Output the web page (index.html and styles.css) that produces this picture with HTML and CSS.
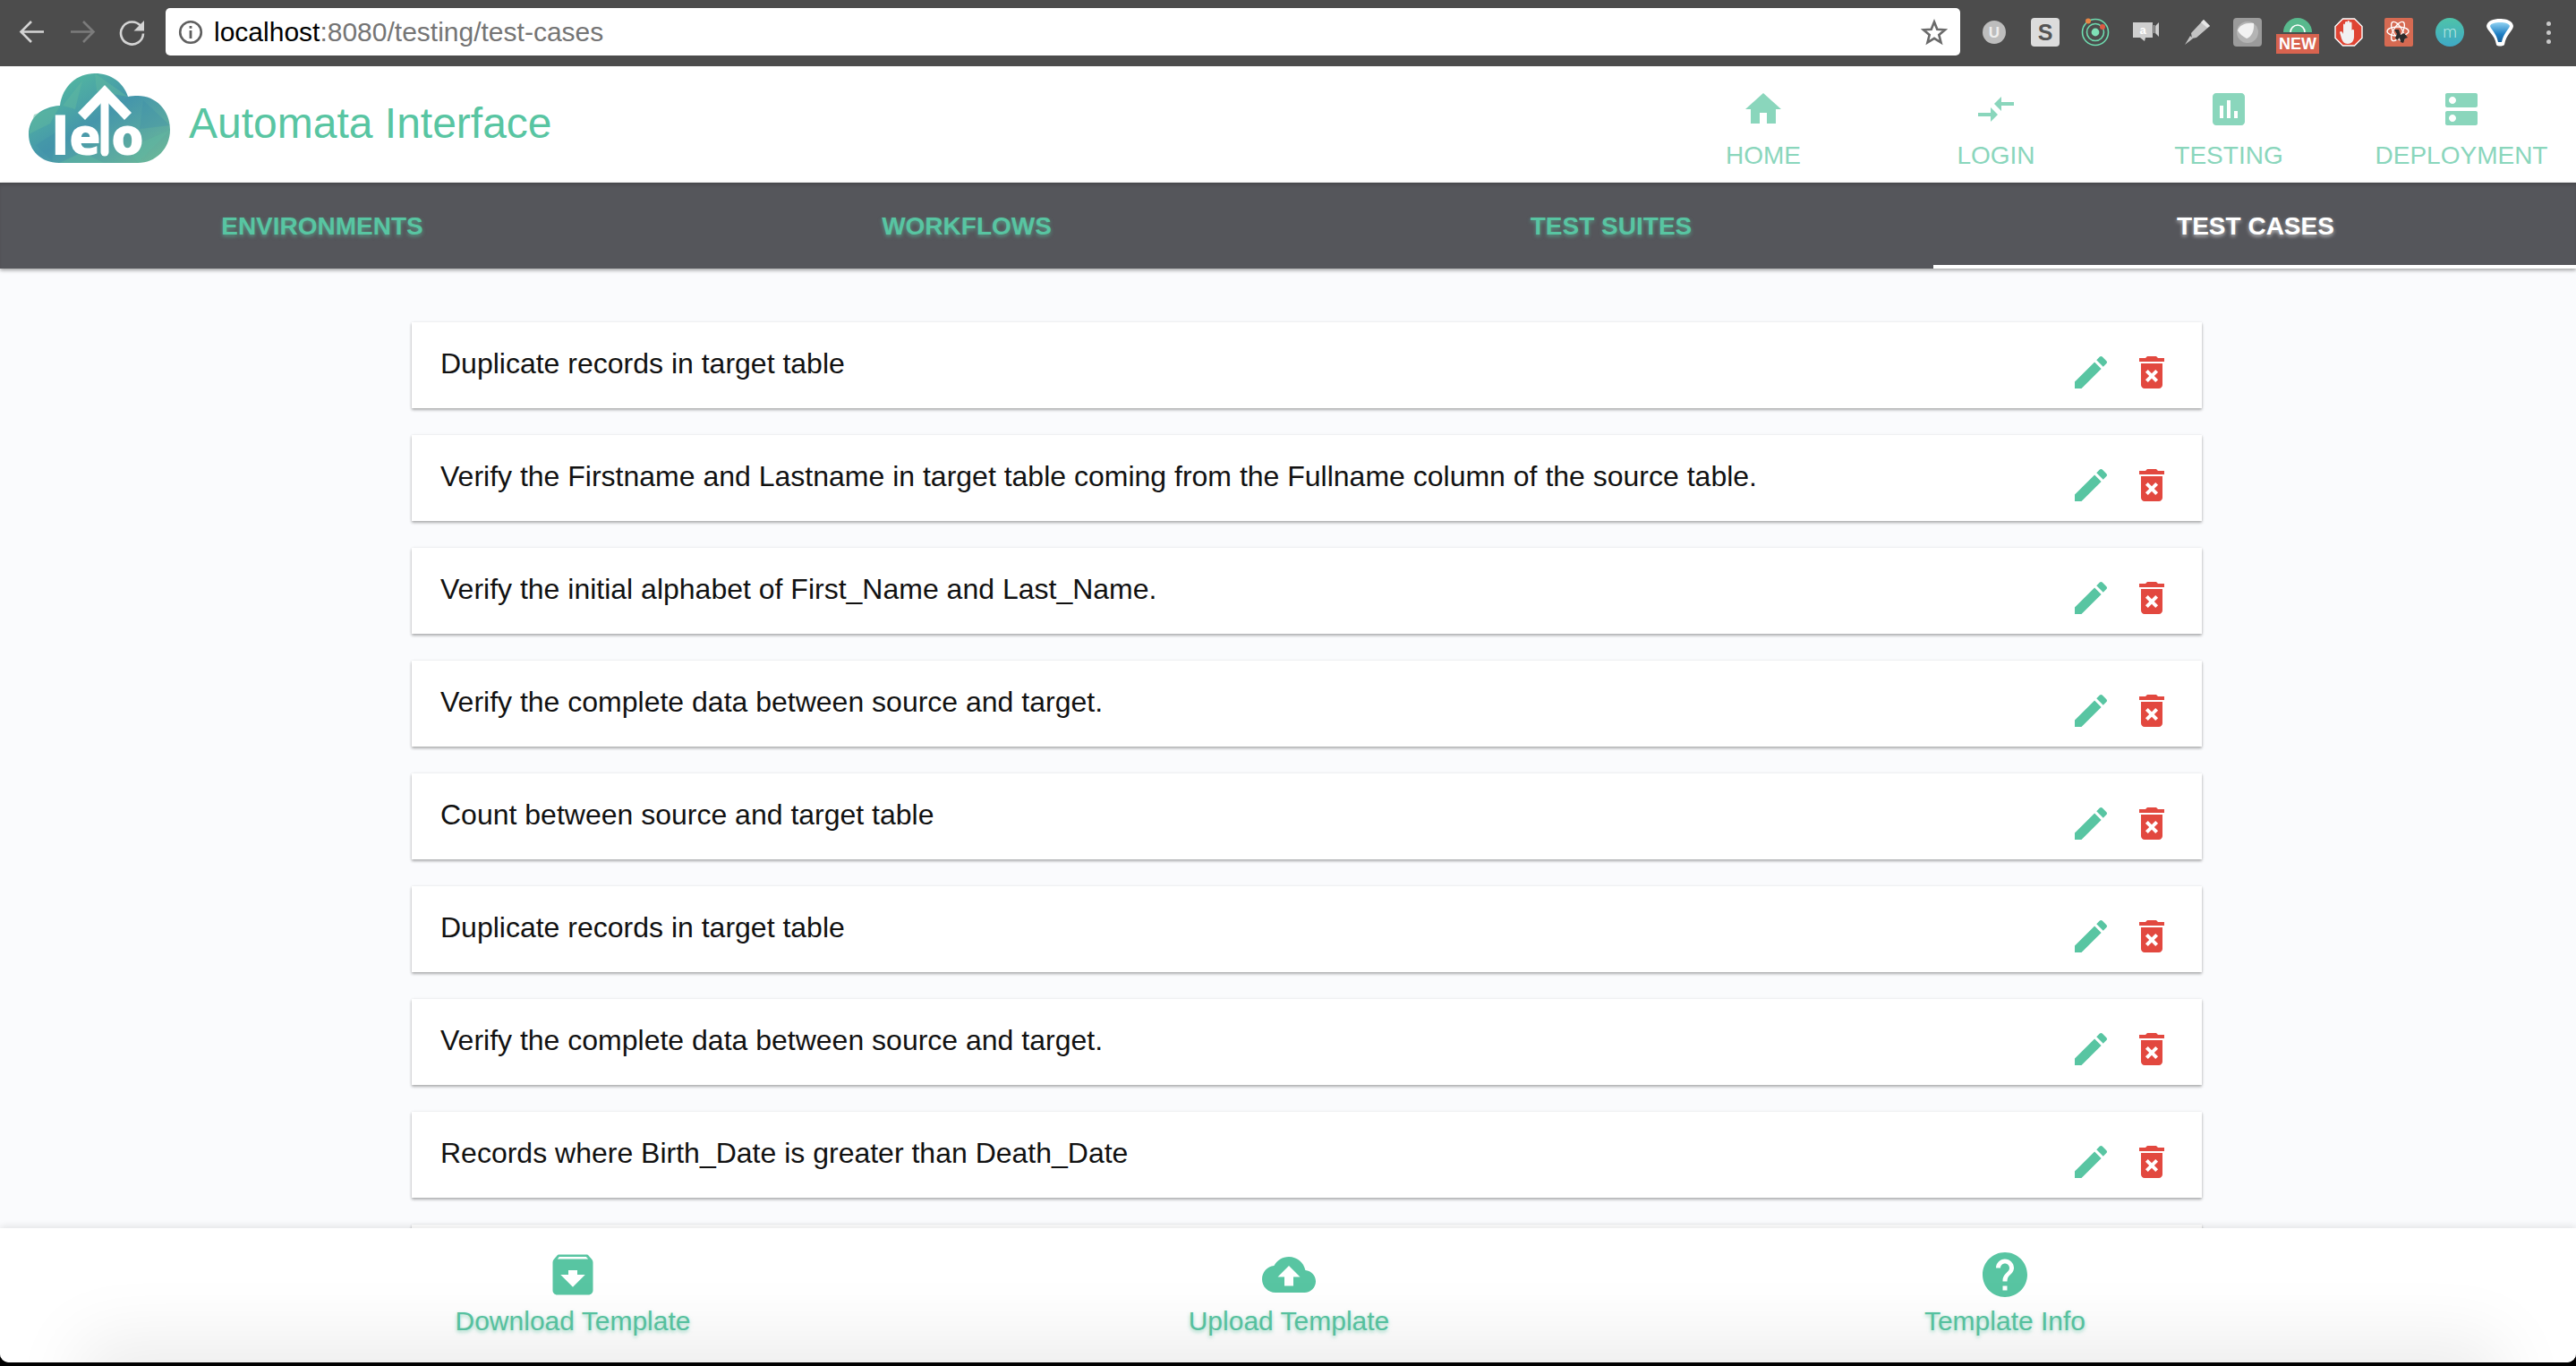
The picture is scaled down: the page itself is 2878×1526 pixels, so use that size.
FILE: index.html
```html
<!DOCTYPE html>
<html lang="en">
<head>
    <meta charset="UTF-8">
    <title>Automata Interface</title>
    <link rel="stylesheet" href="styles.css">
</head>
<body>
<div class="page">
    <div class="browser-bar">
        <div class="browser-nav">
            <svg class="bar-icon" viewBox="0 0 32 32"><path d="M29 15.500H5M15 4 3.500 15.500 15 27" fill="none" stroke="#d4d4d4" stroke-width="2.6"/></svg>
            <svg class="bar-icon" viewBox="0 0 32 32"><path d="M3 15.500h24M17 4l11.500 11.500L17 27" fill="none" stroke="#7b7b7b" stroke-width="2.6"/></svg>
            <svg class="bar-icon" viewBox="0 0 32 32"><path d="M25.500 9.500a12.500 12.500 0 1 0 2.500 8" fill="none" stroke="#d4d4d4" stroke-width="2.6"/><path d="M29 3v11.500H17.500z" fill="#d4d4d4"/></svg>
        </div>
        <div class="url-box">
            <svg class="info-icon" viewBox="0 0 28 28"><circle cx="14" cy="14" r="11.800" fill="none" stroke="#5f5f5f" stroke-width="2.6"/><path d="M12.600 12h2.800v9h-2.800zM12.600 7h2.800v2.800h-2.800z" fill="#5f5f5f"/></svg>
            <span class="url-text"><span class="url-host">localhost</span>:8080/testing/test-cases</span>
            <svg class="star-icon" viewBox="0 0 30 30"><path d="M15 3.500l3.300 8.200 8.800.6-6.800 5.600 2.200 8.600-7.500-4.700-7.500 4.700 2.200-8.600-6.800-5.600 8.800-.6z" fill="none" stroke="#6a6a6a" stroke-width="2.6"/></svg>
        </div>
        <div class="extensions">
            <svg class="ext" viewBox="0 0 32 32"><circle cx="16" cy="16" r="13" fill="#bdbdbd"/><text x="16" y="22" class="ext-label" font-size="17" fill="#eee">U</text></svg>
            <svg class="ext" viewBox="0 0 32 32"><rect width="32" height="32" rx="4" fill="#dcdcdc"/><text x="16" y="25" class="ext-label" font-size="25" fill="#555">S</text></svg>
            <svg class="ext" viewBox="0 0 32 32"><circle cx="16" cy="16" r="14.500" fill="none" stroke="#6fdcb0" stroke-width="1.6"/><circle cx="16" cy="16" r="9.500" fill="none" stroke="#6fdcb0" stroke-width="1.6"/><circle cx="16" cy="16" r="4.400" fill="#7fe0b6"/><circle cx="8" cy="3.600" r="3" fill="#e58545"/><circle cx="24" cy="10" r="3" fill="#de5a43"/></svg>
            <svg class="ext" viewBox="0 0 32 32"><path d="M1 5h22v17h-8l-1 4-5-4H1z" fill="#cfcfcf"/><path d="M24 8h1v9h-1zM26 9l4-4v16l-4-4z" fill="#cfcfcf"/><text x="12" y="18" class="ext-label" font-size="13" fill="#fff">a</text></svg>
            <svg class="ext" viewBox="0 0 32 32"><path d="M10 17 24 2l7 7-15 13-5 1zM9 20l3 3-9 7z" fill="#c4c4c4"/><path d="M24 2l7 7-3 2-7-6z" fill="#e6e6e6"/></svg>
            <svg class="ext" viewBox="0 0 32 32"><rect width="32" height="32" rx="4" fill="#9b9b9b"/><circle cx="16" cy="16" r="12" fill="#b4b4b4"/><path d="M5 14C7 8 14 5 23 6c1 8-3 16-8 17-4-2-8-5-10-9z" fill="#f2f2f2"/></svg>
            <div class="ext-new">
                <svg class="ext-arch" viewBox="0 0 32 16"><path d="M0 16a16 16 0 0 1 32 0z" fill="#58b98d"/><path d="M8 16a8 8 0 0 1 16 0" fill="none" stroke="#fff" stroke-width="1.6"/></svg>
                <span class="new-tag">NEW</span>
            </div>
            <svg class="ext" viewBox="0 0 32 32"><path d="M9.500 1h13L31 9.500v13L22.500 31h-13L1 22.500v-13z" fill="#df4433" stroke="#fff" stroke-width="1.4"/><path d="M10 15V8c0-2 2-2 2 0V5.500c0-2 2.500-2 2.500 0V4.500c0-2 2.500-2 2.500 0V6c0-2 2.500-2 2.500 0v8c0-1.500 2.500-1.500 2.500 0v7c0 5-3 8-7 8s-6-3-7-6l-2-7c1-2 3-1 4 2z" fill="#f1f1f1"/></svg>
            <svg class="ext" viewBox="0 0 32 32"><rect width="32" height="32" rx="2" fill="#d66a52"/><g fill="none" stroke="#fff" stroke-width="1.3"><ellipse cx="15" cy="15" rx="12" ry="5"/><ellipse cx="15" cy="15" rx="12" ry="5" transform="rotate(60 15 15)"/><ellipse cx="15" cy="15" rx="12" ry="5" transform="rotate(120 15 15)"/></g><path d="M11 13h5l2 6 4-2 4 5-3 1-2 5-3-1-1-5-3 3-2-3 2-4z" fill="#2c2c2c"/></svg>
            <svg class="ext" viewBox="0 0 32 32"><defs><linearGradient id="extM" x1="0" y1="0" x2="0" y2="1"><stop offset="0" stop-color="#4fc3a9"/><stop offset="1" stop-color="#3fa9c6"/></linearGradient></defs><circle cx="16" cy="16" r="16" fill="url(#extM)"/><text x="16" y="22" class="ext-thin" font-size="20" fill="#bfe9e8">m</text></svg>
            <svg class="ext" viewBox="0 0 32 32"><defs><linearGradient id="extD" x1="0" y1="0" x2="0" y2="1"><stop offset="0" stop-color="#8fd2f2"/><stop offset="0.6" stop-color="#1f7fc4"/><stop offset="1" stop-color="#155f9a"/></linearGradient></defs><path d="M1 9c1-6 8-8 15-8s14 2 15 8c0 5-8 9-10 21-1 2-8 2-9 0C10 18 1 14 1 9z" fill="#fff"/><path d="M5 9c1-3 6-4 11-4s10 1 11 4c-1 4-7 8-9 18h-4C12 17 6 13 5 9z" fill="url(#extD)"/></svg>
            <div class="ext-dots"><i></i><i></i><i></i></div>
        </div>
    </div>

    <header class="topbar">
        <div class="brand">
            <svg class="logo" viewBox="0 0 158 112">
                <defs>
                    <linearGradient id="logoFill" x1="0" y1="0" x2="1" y2="1">
                        <stop offset="0" stop-color="#58c59b"/>
                        <stop offset="0.5" stop-color="#4596ab"/>
                        <stop offset="1" stop-color="#6fbb97"/>
                    </linearGradient>
                </defs>
                <path d="M34 100C14 100 0 86 0 68 0 50 14 37 35 36 38 14 54 0 74 0c18 0 32 10 37 26 3-1 7-1 11-1 20 0 36 16 36 38 0 21-16 37-36 37z" fill="url(#logoFill)"/>
                <path d="M0 68 24 56 35 36 6 46zM74 0 111 26 76 20zM158 63 122 100 110 84zM34 100 60 88 84 100zM38 36 60 8 52 40z" fill="#5fb8a0" opacity="0.5"/>
                <path d="M128 30 158 58 124 62zM8 80 30 66 26 98z" fill="#3f8fa8" opacity="0.35"/>
                <path d="M85 88V24" stroke="#fff" stroke-width="9" stroke-linecap="round"/>
                <path d="M55 44 85 13l30 31-8 8-22-23-22 23z" fill="#fff"/>
                <text x="26" y="91" class="logo-text">l</text>
                <text x="45" y="91" class="logo-text">e</text>
                <text x="92" y="91" class="logo-text">o</text>
            </svg>
            <span class="brand-name">Automata Interface</span>
        </div>
        <nav class="main-nav">
            <a class="nav-item">
                <svg class="nav-icon" viewBox="0 0 24 24"><path d="M10 20v-6h4v6h5v-8h3L12 3 2 12h3v8z"/></svg>
                <span>HOME</span>
            </a>
            <a class="nav-item">
                <svg class="nav-icon" viewBox="0 0 24 24"><path d="M9.010 14H2v2h7.010v3L13 15l-3.990-4v3zm5.980-1v-3H22V8h-7.010V5L11 9l3.990 4z"/></svg>
                <span>LOGIN</span>
            </a>
            <a class="nav-item">
                <svg class="nav-icon" viewBox="0 0 24 24"><path d="M19 3H5c-1.100 0-2 .9-2 2v14c0 1.100.9 2 2 2h14c1.100 0 2-.9 2-2V5c0-1.100-.9-2-2-2zM9 17H7v-7h2v7zm4 0h-2V7h2v10zm4 0h-2v-4h2v4z"/></svg>
                <span>TESTING</span>
            </a>
            <a class="nav-item">
                <svg class="nav-icon" viewBox="0 0 24 24"><path d="M20 13H4c-.55 0-1 .45-1 1v6c0 .55.45 1 1 1h16c.55 0 1-.45 1-1v-6c0-.55-.45-1-1-1zM7 19c-1.100 0-2-.9-2-2s.9-2 2-2 2 .9 2 2-.9 2-2 2zM20 3H4c-.55 0-1 .45-1 1v6c0 .55.45 1 1 1h16c.55 0 1-.45 1-1V4c0-.55-.45-1-1-1zM7 9c-1.100 0-2-.9-2-2s.9-2 2-2 2 .9 2 2-.9 2-2 2z"/></svg>
                <span>DEPLOYMENT</span>
            </a>
        </nav>
    </header>

    <div class="tabs">
        <a class="tab">ENVIRONMENTS</a>
        <a class="tab">WORKFLOWS</a>
        <a class="tab">TEST SUITES</a>
        <a class="tab tab-active">TEST CASES</a>
    </div>

    <main class="content">
        <div class="case-card"><span class="case-title">Duplicate records in target table</span><div class="case-actions"><svg class="act act-edit" viewBox="0 0 24 24"><path d="M3 17.250V21h3.750L17.810 9.940l-3.750-3.750L3 17.250zM20.710 7.040c.39-.39.39-1.020 0-1.410l-2.340-2.340c-.39-.39-1.020-.39-1.410 0l-1.830 1.830 3.750 3.750 1.830-1.830z"/></svg><svg class="act act-delete" viewBox="0 0 24 24"><path d="M6 19c0 1.100.9 2 2 2h8c1.100 0 2-.9 2-2V7H6v12zm2.460-7.120l1.410-1.410L12 12.590l2.120-2.120 1.410 1.410L13.410 14l2.120 2.120-1.410 1.410L12 15.410l-2.120 2.120-1.410-1.410L10.590 14l-2.130-2.120zM15.500 4l-1-1h-5l-1 1H5v2h14V4z"/></svg></div></div>
        <div class="case-card"><span class="case-title">Verify the Firstname and Lastname in target table coming from the Fullname column of the source table.</span><div class="case-actions"><svg class="act act-edit" viewBox="0 0 24 24"><path d="M3 17.250V21h3.750L17.810 9.940l-3.750-3.750L3 17.250zM20.710 7.040c.39-.39.39-1.020 0-1.410l-2.340-2.340c-.39-.39-1.020-.39-1.410 0l-1.830 1.830 3.750 3.750 1.830-1.830z"/></svg><svg class="act act-delete" viewBox="0 0 24 24"><path d="M6 19c0 1.100.9 2 2 2h8c1.100 0 2-.9 2-2V7H6v12zm2.460-7.120l1.410-1.410L12 12.590l2.120-2.120 1.410 1.410L13.410 14l2.120 2.120-1.410 1.410L12 15.410l-2.120 2.120-1.410-1.410L10.590 14l-2.130-2.120zM15.500 4l-1-1h-5l-1 1H5v2h14V4z"/></svg></div></div>
        <div class="case-card"><span class="case-title">Verify the initial alphabet of First_Name and Last_Name.</span><div class="case-actions"><svg class="act act-edit" viewBox="0 0 24 24"><path d="M3 17.250V21h3.750L17.810 9.940l-3.750-3.750L3 17.250zM20.710 7.040c.39-.39.39-1.020 0-1.410l-2.340-2.340c-.39-.39-1.020-.39-1.410 0l-1.830 1.830 3.750 3.750 1.830-1.830z"/></svg><svg class="act act-delete" viewBox="0 0 24 24"><path d="M6 19c0 1.100.9 2 2 2h8c1.100 0 2-.9 2-2V7H6v12zm2.460-7.120l1.410-1.410L12 12.590l2.120-2.120 1.410 1.410L13.410 14l2.120 2.120-1.410 1.410L12 15.410l-2.120 2.120-1.410-1.410L10.590 14l-2.130-2.120zM15.500 4l-1-1h-5l-1 1H5v2h14V4z"/></svg></div></div>
        <div class="case-card"><span class="case-title">Verify the complete data between source and target.</span><div class="case-actions"><svg class="act act-edit" viewBox="0 0 24 24"><path d="M3 17.250V21h3.750L17.810 9.940l-3.750-3.750L3 17.250zM20.710 7.040c.39-.39.39-1.020 0-1.410l-2.340-2.340c-.39-.39-1.020-.39-1.410 0l-1.830 1.830 3.750 3.750 1.830-1.830z"/></svg><svg class="act act-delete" viewBox="0 0 24 24"><path d="M6 19c0 1.100.9 2 2 2h8c1.100 0 2-.9 2-2V7H6v12zm2.460-7.120l1.410-1.410L12 12.590l2.120-2.120 1.410 1.410L13.410 14l2.120 2.120-1.410 1.410L12 15.410l-2.120 2.120-1.410-1.410L10.590 14l-2.130-2.120zM15.500 4l-1-1h-5l-1 1H5v2h14V4z"/></svg></div></div>
        <div class="case-card"><span class="case-title">Count between source and target table</span><div class="case-actions"><svg class="act act-edit" viewBox="0 0 24 24"><path d="M3 17.250V21h3.750L17.810 9.940l-3.750-3.750L3 17.250zM20.710 7.040c.39-.39.39-1.020 0-1.410l-2.340-2.340c-.39-.39-1.020-.39-1.410 0l-1.830 1.830 3.750 3.750 1.830-1.830z"/></svg><svg class="act act-delete" viewBox="0 0 24 24"><path d="M6 19c0 1.100.9 2 2 2h8c1.100 0 2-.9 2-2V7H6v12zm2.460-7.120l1.410-1.410L12 12.590l2.120-2.120 1.410 1.410L13.410 14l2.120 2.120-1.410 1.410L12 15.410l-2.120 2.120-1.410-1.410L10.590 14l-2.130-2.120zM15.500 4l-1-1h-5l-1 1H5v2h14V4z"/></svg></div></div>
        <div class="case-card"><span class="case-title">Duplicate records in target table</span><div class="case-actions"><svg class="act act-edit" viewBox="0 0 24 24"><path d="M3 17.250V21h3.750L17.810 9.940l-3.750-3.750L3 17.250zM20.710 7.040c.39-.39.39-1.020 0-1.410l-2.340-2.340c-.39-.39-1.020-.39-1.410 0l-1.830 1.830 3.750 3.750 1.830-1.830z"/></svg><svg class="act act-delete" viewBox="0 0 24 24"><path d="M6 19c0 1.100.9 2 2 2h8c1.100 0 2-.9 2-2V7H6v12zm2.460-7.120l1.410-1.410L12 12.590l2.120-2.120 1.410 1.410L13.410 14l2.120 2.120-1.410 1.410L12 15.410l-2.120 2.120-1.410-1.410L10.590 14l-2.130-2.120zM15.500 4l-1-1h-5l-1 1H5v2h14V4z"/></svg></div></div>
        <div class="case-card"><span class="case-title">Verify the complete data between source and target.</span><div class="case-actions"><svg class="act act-edit" viewBox="0 0 24 24"><path d="M3 17.250V21h3.750L17.810 9.940l-3.750-3.750L3 17.250zM20.710 7.040c.39-.39.39-1.020 0-1.410l-2.340-2.340c-.39-.39-1.020-.39-1.410 0l-1.830 1.830 3.750 3.750 1.830-1.830z"/></svg><svg class="act act-delete" viewBox="0 0 24 24"><path d="M6 19c0 1.100.9 2 2 2h8c1.100 0 2-.9 2-2V7H6v12zm2.460-7.120l1.410-1.410L12 12.590l2.120-2.120 1.410 1.410L13.410 14l2.120 2.120-1.410 1.410L12 15.410l-2.120 2.120-1.410-1.410L10.590 14l-2.130-2.120zM15.500 4l-1-1h-5l-1 1H5v2h14V4z"/></svg></div></div>
        <div class="case-card"><span class="case-title">Records where Birth_Date is greater than Death_Date</span><div class="case-actions"><svg class="act act-edit" viewBox="0 0 24 24"><path d="M3 17.250V21h3.750L17.810 9.940l-3.750-3.750L3 17.250zM20.710 7.040c.39-.39.39-1.020 0-1.410l-2.340-2.340c-.39-.39-1.020-.39-1.410 0l-1.830 1.830 3.750 3.750 1.830-1.830z"/></svg><svg class="act act-delete" viewBox="0 0 24 24"><path d="M6 19c0 1.100.9 2 2 2h8c1.100 0 2-.9 2-2V7H6v12zm2.460-7.120l1.410-1.410L12 12.590l2.120-2.120 1.410 1.410L13.410 14l2.120 2.120-1.410 1.410L12 15.410l-2.120 2.120-1.410-1.410L10.590 14l-2.130-2.120zM15.500 4l-1-1h-5l-1 1H5v2h14V4z"/></svg></div></div>
        <div class="case-card"></div>
    </main>

    <footer class="footer">
        <a class="foot-item">
            <svg class="foot-icon" viewBox="0 0 24 24"><path d="M20.540 5.230l-1.390-1.680C18.880 3.210 18.470 3 18 3H6c-.47 0-.88.21-1.160.55L3.460 5.230C3.170 5.570 3 6.020 3 6.500V19c0 1.100.9 2 2 2h14c1.100 0 2-.9 2-2V6.500c0-.48-.17-.93-.46-1.270zM12 17.500L6.500 12H10v-2h4v2h3.500L12 17.500zM5.120 5l.81-1h12l.94 1H5.120z"/></svg>
            <span>Download Template</span>
        </a>
        <a class="foot-item">
            <svg class="foot-icon" viewBox="0 0 24 24"><path d="M19.350 10.040C18.670 6.590 15.640 4 12 4 9.110 4 6.600 5.640 5.350 8.040 2.340 8.360 0 10.910 0 14c0 3.310 2.690 6 6 6h13c2.760 0 5-2.240 5-5 0-2.640-2.050-4.780-4.650-4.960zM14 13v4h-4v-4H7l5-5 5 5h-3z"/></svg>
            <span>Upload Template</span>
        </a>
        <a class="foot-item">
            <svg class="foot-icon" viewBox="0 0 24 24"><path d="M12 2C6.480 2 2 6.480 2 12s4.480 10 10 10 10-4.480 10-10S17.520 2 12 2zm1 17h-2v-2h2v2zm2.070-7.750l-.9.920C13.450 12.900 13 13.500 13 15h-2v-.5c0-1.100.45-2.100 1.170-2.830l1.240-1.260c.37-.36.59-.86.59-1.410 0-1.100-.9-2-2-2s-2 .9-2 2H8c0-2.210 1.790-4 4-4s4 1.790 4 4c0 .88-.36 1.680-.93 2.250z"/></svg>
            <span>Template Info</span>
        </a>
    </footer>
</div>
</body>
</html>
```

FILE: styles.css
```css
html, body {
    height: 100%;
    margin: 0;
    overflow: hidden;
    background-color: #000;
    font-family: "Liberation Sans", Arial, sans-serif;
}
.page {
    display: flex;
    flex-direction: column;
    height: 1522px;
    overflow: hidden;
    border-radius: 0 0 10px 10px;
    background-color: #fafbfd;
}

/* browser chrome */
.browser-bar {
    display: flex;
    align-items: flex-start;
    flex: 0 0 74px;
    box-sizing: border-box;
    height: 74px;
    padding-top: 9px;
    background-color: #4c4c4c;
}
.browser-nav {
    display: flex;
    gap: 24px;
    width: 185px;
    box-sizing: border-box;
    padding: 11px 0 0 20px;
}
.bar-icon {
    width: 32px;
    height: 32px;
}
.url-box {
    display: flex;
    align-items: center;
    width: 2005px;
    height: 53px;
    box-sizing: border-box;
    padding: 0 14px 0 14px;
    background-color: #fff;
    border-radius: 5px;
}
.info-icon {
    width: 28px;
    height: 28px;
    margin-right: 12px;
}
.url-text {
    flex-grow: 1;
    font-size: 30px;
    color: #757575;
}
.url-host {
    color: #000;
}
.star-icon {
    width: 30px;
    height: 30px;
}
.extensions {
    display: flex;
    align-items: center;
    gap: 24.500px;
    height: 32px;
    padding: 11px 0 0 22px;
}
.ext {
    flex: 0 0 32px;
    width: 32px;
    height: 32px;
}
.ext-label {
    font-family: "Liberation Sans", sans-serif;
    font-weight: 700;
    text-anchor: middle;
}
.ext-thin {
    font-family: "Lato", sans-serif;
    font-weight: 300;
    text-anchor: middle;
}
.ext-new {
    flex: 0 0 32px;
    width: 32px;
    height: 32px;
}
.ext-arch {
    display: block;
    width: 32px;
    height: 16px;
}
.new-tag {
    display: block;
    width: 48px;
    height: 22px;
    margin: 2px -8px 0;
    line-height: 22px;
    text-align: center;
    font-size: 18px;
    font-weight: 700;
    color: #fff;
    background-color: #d8634f;
}
.ext-dots {
    display: flex;
    flex-direction: column;
    align-items: center;
    gap: 5px;
    margin-left: 11px;
}
.ext-dots i {
    width: 5px;
    height: 5px;
    border-radius: 50%;
    background-color: #c8c8c8;
}

/* header */
.topbar {
    display: flex;
    justify-content: space-between;
    flex: 0 0 130px;
    background-color: #fff;
}
.brand {
    display: flex;
    align-items: flex-start;
}
.logo {
    width: 158px;
    height: 112px;
    margin: 8px 0 0 32px;
}
.logo-text {
    font-family: "Open Sans", sans-serif;
    font-size: 58px;
    font-weight: 800;
    fill: #fff;
}
.brand-name {
    margin: 36px 0 0 21px;
    font-size: 48px;
    line-height: 56px;
    color: #58c5a2;
}
.main-nav {
    display: flex;
    margin-right: -2px;
}
.nav-item {
    display: flex;
    flex-direction: column;
    align-items: center;
    width: 260px;
    padding-top: 24px;
    font-size: 28px;
    line-height: 32px;
    color: #8ad6bc;
}
.nav-icon {
    width: 48px;
    height: 48px;
    margin-bottom: 12px;
    fill: #8ad6bc;
}

/* tabs */
.tabs {
    display: flex;
    flex: 0 0 96px;
    position: relative;
    z-index: 1;
    background-color: #55565b;
    box-shadow: 0 2px 4px rgba(0, 0, 0, 0.35), inset 0 4px 4px -2px rgba(0, 0, 0, 0.2);
}
.tab {
    flex: 0 0 720px;
    box-sizing: border-box;
    height: 96px;
    padding-top: 5px;
    line-height: 87px;
    text-align: center;
    font-size: 28px;
    font-weight: 700;
    color: #58c5a2;
    text-shadow: 0 2px 4px rgba(88, 197, 162, 0.6);
}
.tab-active {
    color: #fff;
    border-bottom: 4px solid #fff;
    text-shadow: 0 2px 4px rgba(255, 255, 255, 0.6);
}

/* list */
.content {
    flex: 1;
    min-height: 0;
    overflow: hidden;
    padding-top: 60px;
}
.case-card {
    display: flex;
    justify-content: space-between;
    width: 2000px;
    height: 96px;
    box-sizing: border-box;
    margin: 0 0 30px 460px;
    padding: 0 32px;
    background-color: #fff;
    box-shadow: 0 2px 3px rgba(0, 0, 0, 0.3), 0 0 3px rgba(0, 0, 0, 0.08);
}
.case-title {
    font-size: 32px;
    line-height: 93px;
    color: #111;
}
.case-actions {
    display: flex;
    gap: 20px;
    padding-top: 32px;
}
.act {
    width: 48px;
    height: 48px;
}
.act-edit {
    fill: #58c5a2;
}
.act-delete {
    fill: #e2483f;
}

/* footer */
.footer {
    display: flex;
    justify-content: center;
    flex: 0 0 150px;
    box-sizing: border-box;
    padding-left: 2px;
    position: relative;
    z-index: 2;
    overflow: hidden;
    background-color: #fff;
    box-shadow: 0 -2px 8px rgba(0, 0, 0, 0.1);
}
.footer::after {
    content: "";
    position: absolute;
    left: 90px;
    right: 84px;
    top: 100%;
    height: 120px;
    box-shadow: 0 -25px 80px rgba(0, 0, 0, 0.08);
}
.foot-item {
    display: flex;
    flex-direction: column;
    align-items: center;
    width: 800px;
    padding-top: 22px;
    font-size: 30px;
    line-height: 36px;
    color: #58c5a2;
    text-shadow: 0 2px 4px rgba(88, 197, 162, 0.6);
}
.foot-icon {
    width: 60px;
    height: 60px;
    margin-bottom: 4px;
    fill: #58c5a2;
}
```
